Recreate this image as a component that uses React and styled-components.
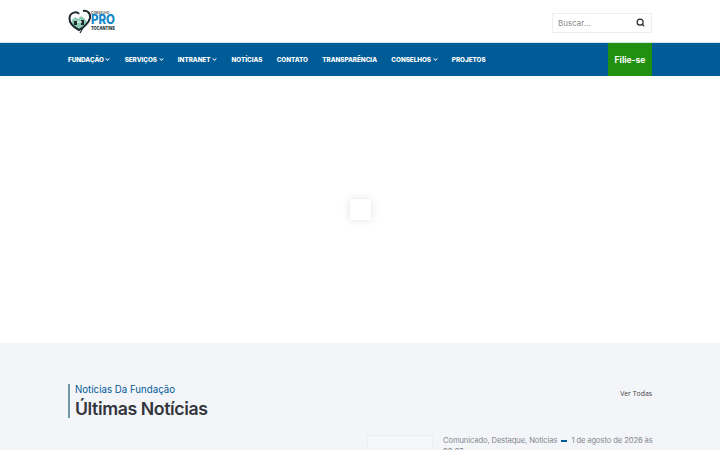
import React from 'react';
import styled, { createGlobalStyle } from 'styled-components';
import { FaChevronDown } from 'react-icons/fa';
import { Search } from 'lucide-react';

const GlobalStyle = createGlobalStyle`
    html, body {
        margin: 0;
        padding: 0;
        height: 450px;
        overflow: hidden;
        background: #fff;
        font-family: "Inter", "Liberation Sans", sans-serif;
    }
    * { box-sizing: border-box; }
`

const Container = styled.div`
    width: 584px;
    margin: 0 auto;
    display: flex;
    align-items: center;
    justify-content: space-between;
`

const TopBar = styled.header`
    height: 42px;
    background: #fff;
    display: flex;
    align-items: center;
`

const LogoWrap = styled.a`
    display: block;
    width: 48px;
    height: 24px;
    svg { display: block; overflow: visible; }
    text { font-family: "Inter", "Liberation Sans", sans-serif; font-weight: 800; }
`

const SearchBox = styled.form`
    width: 100px;
    height: 20px;
    margin-top: 3px;
    border: 1px solid #eeeeee;
    display: flex;
    align-items: center;
    justify-content: space-between;
    padding: 0 6px 0 5px;
`

const SearchInput = styled.input`
    width: 70px;
    border: 0;
    padding: 0;
    outline: none;
    background: transparent;
    font-family: inherit;
    font-size: 8px;
    color: #666;
    &::placeholder { color: #8a8a8a; }
`

const SearchIcon = styled(Search)`
    width: 9px;
    height: 9px;
    color: #222;
`

const NavBar = styled.nav`
    height: 34px;
    background: #005c97;
    border-top: 1px solid #d8e4ec;
`

const NavInner = styled(Container)`
    height: 33px;
    align-items: stretch;
`

const NavList = styled.ul`
    display: flex;
    align-items: center;
    gap: 14.3px;
    list-style: none;
    margin: 0;
    padding: 0;
`

const NavItem = styled.li`
    display: flex;
    align-items: center;
    gap: 1.5px;
    color: #fff;
    font-size: 6.3px;
    font-weight: 800;
    white-space: nowrap;
`

const Caret = styled(FaChevronDown)`
    width: 5px;
    height: 5px;
`

const JoinButton = styled.a`
    width: 44px;
    background: #22900f;
    color: #fff;
    display: flex;
    align-items: center;
    justify-content: center;
    font-size: 8.5px;
    font-weight: 700;
`

const Hero = styled.section`
    height: 267px;
    background: #fff;
    display: flex;
    align-items: center;
    justify-content: center;
`

const Loader = styled.div`
    width: 21px;
    height: 21px;
    background: #fff;
    box-shadow: 0 0 9px rgba(0, 0, 0, 0.12);
`

const NewsSection = styled.section`
    height: 107px;
    overflow: hidden;
    background: #f3f5f9;
    padding-top: 41px;
`

const NewsHead = styled(Container)`
    align-items: flex-start;
`

const Heading = styled.div`
    height: 34px;
    border-left: 2px solid #6d9aa8;
    padding-left: 5px;
    display: flex;
    flex-direction: column;
`

const Eyebrow = styled.span`
    font-size: 9.7px;
    line-height: 11px;
    color: #005c97;
`

const Title = styled.h2`
    margin: 4px 0 0;
    font-size: 17.7px;
    line-height: 19px;
    font-weight: 600;
    letter-spacing: -0.4px;
    color: #33353d;
`

const SeeAll = styled.a`
    font-family: "Open Sans", sans-serif;
    font-size: 6.9px;
    line-height: 10px;
    color: #444;
    margin-top: 5px;
`

const NewsRow = styled.div`
    width: 584px;
    margin: 17px auto 0;
    display: flex;
    justify-content: flex-end;
    gap: 10px;
`

const Thumb = styled.div`
    width: 66px;
    height: 40px;
    background: #f5f6fa;
    border: 1px solid #eceef2;
`

const Meta = styled.div`
    width: 209px;
    font-size: 7.6px;
    line-height: 11px;
    letter-spacing: -0.1px;
    white-space: nowrap;
    color: #85878d;
`

const Dash = styled.span`
    display: inline-block;
    width: 6px;
    height: 2px;
    background: #005c97;
    margin: 0 4px;
    vertical-align: middle;
`

const menu = [
    { label: 'FUNDAÇÃO', sub: true },
    { label: 'SERVIÇOS', sub: true },
    { label: 'INTRANET', sub: true },
    { label: 'NOTÍCIAS' },
    { label: 'CONTATO' },
    { label: 'TRANSPARÊNCIA' },
    { label: 'CONSELHOS', sub: true },
    { label: 'PROJETOS' },
];

const Logo = () => (
    <LogoWrap>
        <svg width="48" height="24" viewBox="0 0 48 24" fill="none">
            <path d="M4 15V11l3-3 3 2 3-3 3 2 3 4-1 3-7 5z" fill="#8ccbb4" />
            <path d="M11 5C9 2 2 3 1.500 9c-.4 5 4 9 9.500 12 4-2 10-7 11-12 .8-5-3-8-7-7" stroke="#1d2b2e" strokeWidth="2" />
            <path d="M6 16v-4h3v4zM13 16v-5h3v5z" fill="#1d2b2e" />
            <path d="M9 13h5" stroke="#fff" strokeWidth="1" />
            <path d="M15 19l-3 5" stroke="#1d2b2e" strokeWidth="1.200" />
            <text x="23" y="4.500" fontSize="3" fill="#666" textLength="18">CONSELHO</text>
            <text x="23" y="15" fontSize="12.500" fill="#1488c8" textLength="24" lengthAdjust="spacingAndGlyphs">PRO</text>
            <text x="23" y="20.500" fontSize="4.500" fill="#20303a" textLength="24" lengthAdjust="spacingAndGlyphs">TOCANTINS</text>
        </svg>
    </LogoWrap>
);

const App = () => {
    return (<>
        <GlobalStyle />
        <TopBar>
            <Container>
                <Logo />
                <SearchBox>
                    <SearchInput placeholder="Buscar..." />
                    <SearchIcon strokeWidth={3} />
                </SearchBox>
            </Container>
        </TopBar>
        <NavBar>
            <NavInner>
                <NavList>
                    {menu.map(item => (
                        <NavItem key={item.label}>
                            {item.label}
                            {item.sub && <Caret />}
                        </NavItem>
                    ))}
                </NavList>
                <JoinButton>Filie-se</JoinButton>
            </NavInner>
        </NavBar>
        <Hero>
            <Loader />
        </Hero>
        <NewsSection>
            <NewsHead>
                <Heading>
                    <Eyebrow>Notícias Da Fundação</Eyebrow>
                    <Title>Últimas Notícias</Title>
                </Heading>
                <SeeAll>Ver Todas</SeeAll>
            </NewsHead>
            <NewsRow>
                <Thumb />
                <Meta>
                    Comunicado, Destaque, Notícias<Dash />1 de agosto de 2026 às<br />00:07
                </Meta>
            </NewsRow>
        </NewsSection>
    </>)
}

export default App
